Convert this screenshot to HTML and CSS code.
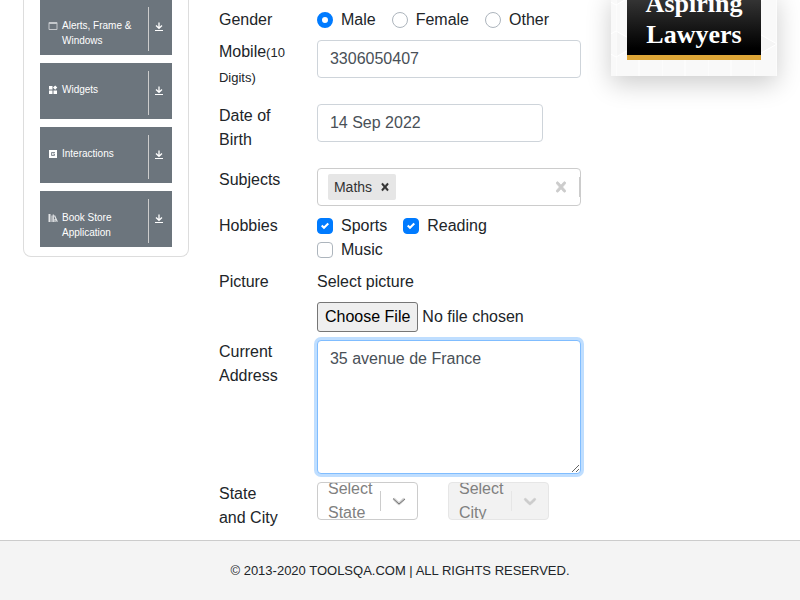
FILE: index.html
```html
<!DOCTYPE html>
<html lang="en">
<head>
<meta charset="utf-8">
<meta name="viewport" content="width=device-width, initial-scale=1">
<title>Student Registration Form</title>
<link rel="stylesheet" href="styles.css">
</head>
<body>
<svg class="sprite" aria-hidden="true">
  <symbol id="down" viewBox="0 0 10 10"><path d="M5 .5v5.5M2 3.500l3 2.800 3-2.800" fill="none" stroke="currentColor" stroke-width="1.300"/><path d="M1 8.500h8" stroke="currentColor"/></symbol>
  <symbol id="cross" viewBox="0 0 20 20"><path fill="currentColor" stroke="currentColor" stroke-width=".8" d="M14.348 14.849c-0.469 0.469-1.229 0.469-1.697 0l-2.651-3.030-2.651 3.029c-0.469 0.469-1.229 0.469-1.697 0-0.469-0.469-0.469-1.229 0-1.697l2.758-3.15-2.759-3.152c-0.469-0.469-0.469-1.228 0-1.697s1.228-0.469 1.697 0l2.652 3.031 2.651-3.031c0.469-0.469 1.228-0.469 1.697 0s0.469 1.229 0 1.697l-2.758 3.152 2.758 3.15c0.469 0.469 0.469 1.229 0 1.698z"/></symbol>
  <symbol id="chevron" viewBox="0 0 20 20"><path fill="currentColor" stroke="currentColor" stroke-width=".5" d="M4.516 7.548c0.436-0.446 1.043-0.481 1.576 0l3.908 3.747 3.908-3.747c0.533-0.481 1.141-0.446 1.574 0 0.436 0.445 0.408 1.197 0 1.615-0.406 0.418-4.695 4.502-4.695 4.502-0.217 0.223-0.502 0.335-0.787 0.335s-0.57-0.112-0.789-0.335c0 0-4.287-4.084-4.695-4.502s-0.436-1.17 0-1.615z"/></symbol>
</svg>
<main class="page">
  <nav class="sidebar" aria-label="Sections">
    <button class="group" type="button">
      <svg class="group-icon" viewBox="0 0 10 10" aria-hidden="true"><path d="M1 1.500h8v7H1z" fill="none" stroke="#c4c8cc"/><path d="M1 2.500h8" stroke="#c4c8cc"/></svg>
      <span class="group-name">Alerts, Frame &amp; Windows</span>
      <span class="group-toggle"><svg class="group-arrow"><use href="#down"/></svg></span>
    </button>
    <button class="group" type="button">
      <svg class="group-icon" viewBox="0 0 10 10" aria-hidden="true"><path d="M1 1h3.500v3.500H1zM1 5.500h3.500v3.500H1zM5.500 5.500H9V9H5.500zM7.200 .4l2.100 2.200-2.100 2.200-2.200-2.200z" fill="#fff"/></svg>
      <span class="group-name">Widgets</span>
      <span class="group-toggle"><svg class="group-arrow"><use href="#down"/></svg></span>
    </button>
    <button class="group" type="button">
      <svg class="group-icon" viewBox="0 0 10 10" aria-hidden="true"><path d="M1 1h8v8H1z" fill="#fff"/><path d="M7 3.500H3.500v3h3V5H4.500" fill="none" stroke="#6c757d" stroke-width=".8"/></svg>
      <span class="group-name">Interactions</span>
      <span class="group-toggle"><svg class="group-arrow"><use href="#down"/></svg></span>
    </button>
    <button class="group" type="button">
      <svg class="group-icon" viewBox="0 0 10 10" aria-hidden="true"><path d="M.5 1h2v8h-2zM3.500 2.500h1V9h-1z" fill="#e2e4e6"/><path d="M5.300 1.500V9M6.500 2.500L9.300 8.800M7 6v3" stroke="#e2e4e6" stroke-width="1.200"/></svg>
      <span class="group-name">Book Store Application</span>
      <span class="group-toggle"><svg class="group-arrow"><use href="#down"/></svg></span>
    </button>
  </nav>

  <form class="form">
    <div class="row" role="radiogroup" aria-labelledby="gender-label">
      <span class="label" id="gender-label">Gender</span>
      <div class="options">
        <label class="option"><input class="radio" type="radio" name="gender" checked>Male</label>
        <label class="option"><input class="radio" type="radio" name="gender">Female</label>
        <label class="option"><input class="radio" type="radio" name="gender">Other</label>
      </div>
    </div>
    <div class="row row-tall">
      <label class="label" for="mobile">Mobile<small class="hint">(10 Digits)</small></label>
      <input class="control" id="mobile" type="text" value="3306050407">
    </div>
    <div class="row row-tall">
      <label class="label" for="birth">Date of Birth</label>
      <input class="control control-date" id="birth" type="text" value="14 Sep 2022">
    </div>
    <div class="row">
      <label class="label" for="subjects">Subjects</label>
      <div class="multi">
        <span class="tag">Maths<button class="tag-remove" type="button" aria-label="Remove Maths"><svg class="tag-cross"><use href="#cross"/></svg></button></span>
        <input class="multi-input" id="subjects" type="text">
        <button class="multi-clear" type="button" aria-label="Clear subjects"><svg class="icon"><use href="#cross"/></svg></button>
        <span class="multi-divider"></span>
      </div>
    </div>
    <div class="row" role="group" aria-labelledby="hobbies-label">
      <span class="label" id="hobbies-label">Hobbies</span>
      <div class="options">
        <label class="option"><input class="check" type="checkbox" checked>Sports</label>
        <label class="option"><input class="check" type="checkbox" checked>Reading</label>
        <label class="option"><input class="check" type="checkbox">Music</label>
      </div>
    </div>
    <div class="row">
      <span class="label">Picture</span>
      <div class="upload">
        <label for="picture">Select picture</label>
        <input class="file" id="picture" type="file">
      </div>
    </div>
    <div class="row">
      <label class="label" for="address">Current Address</label>
      <textarea class="control control-area control-active" id="address" rows="5">35 avenue de France</textarea>
    </div>
    <div class="row">
      <span class="label">State and City</span>
      <div class="places">
        <div class="select">
          <span class="select-text" aria-hidden="true">Select State</span>
          <span class="select-arrow"><svg class="icon" viewBox="0 0 20 20" aria-hidden="true"><use href="#chevron"/><path d="M4 7.500l6 5.500 6-5" fill="none" stroke="#777"/></svg></span>
          <select class="select-native" aria-label="State"><option>Select State</option></select>
        </div>
        <div class="select select-off">
          <span class="select-text" aria-hidden="true">Select City</span>
          <span class="select-arrow"><svg class="icon"><use href="#chevron"/></svg></span>
          <select class="select-native" aria-label="City" disabled><option>Select City</option></select>
        </div>
      </div>
    </div>
  </form>

  <aside class="ad">
    <svg class="ad-pattern" aria-hidden="true">
      <defs><pattern id="mesh" width="46" height="52" patternUnits="userSpaceOnUse" x="5" y="26"><path d="M0 13l23 13L0 39z" fill="#f5f5f5"/><path d="M23 0v52M0 13l46 26M46 13L0 39M0 0v52" fill="none" stroke="#fff"/></pattern></defs>
      <rect width="100%" height="100%" fill="url(#mesh)"/>
    </svg>
    <div class="poster">Aspiring Lawyers</div>
  </aside>
</main>
<footer class="footer">© 2013-2020 TOOLSQA.COM | ALL RIGHTS RESERVED.</footer>
</body>
</html>
```
FILE: styles.css
```css
* { box-sizing: border-box; }

body {
  margin: 0;
  min-height: 100vh;
  display: flex;
  flex-direction: column;
  overflow: hidden;
  background: #fff;
  color: #212529;
  font: 16px/24px "Liberation Sans", Arial, sans-serif;
}

button, input, textarea, select { font: inherit; color: inherit; margin: 0; }

.sprite { position: absolute; width: 0; height: 0; }

/* The page rests slightly scrolled, so its top edge is out of view. */
.page {
  display: grid;
  grid-template-columns: 11fr 24fr 11fr;
  gap: 30px;
  align-items: start;
  margin-top: -8px;
  padding: 0 23px 10px;
}

.sidebar {
  display: flex;
  flex-direction: column;
  gap: 8px;
  padding: 7px 16px 9px;
  border: 1px solid #ddd;
  border-top: 0;
  border-radius: 0 0 8px 8px;
}

.group {
  display: flex;
  height: 56px;
  padding: 8px 0 4px 8px;
  border: 0;
  background: #6c757d;
  color: #fff;
  font-size: 10px;
  line-height: 15px;
  text-align: left;
}

.group-icon { flex: none; width: 10px; height: 10px; margin: 14px 4px 0 0; }
.group-name { flex: 1; min-width: 0; margin-top: 11px; }
.group-toggle { display: flex; width: 24px; height: 44px; padding: 15px 0 0 5px; border-left: 1px solid #ccc; }
.group-arrow { width: 10px; height: 10px; }

.form { display: flex; flex-direction: column; gap: 8px; padding-top: 16px; }
.row { display: grid; grid-template-columns: 68px minmax(0, 1fr); gap: 30px; align-items: start; }
.row-tall { height: 56px; }
.hint { font-size: 13px; }

.options { display: flex; flex-wrap: wrap; }
.option { display: flex; align-items: center; gap: 8px; margin-right: 16px; }

.radio, .check {
  appearance: none;
  width: 16px;
  height: 16px;
  border: 1px solid #adb5bd;
  background: #fff;
}
.radio { border-radius: 50%; }
.radio:checked { border: 5px solid #007bff; }
.check { border-radius: 4px; }
.check:checked {
  border-color: #007bff;
  background: #007bff url("data:image/svg+xml,%3Csvg xmlns='http://www.w3.org/2000/svg' viewBox='0 0 8 8'%3E%3Cpath fill='%23fff' d='M6.564.75l-3.590 3.612-1.538-1.550L0 4.260l2.974 2.990L8 2.193z'/%3E%3C/svg%3E") center / 8px 8px no-repeat;
}

.control {
  width: 100%;
  height: 38px;
  padding: 6px 12px;
  border: 1px solid #ced4da;
  border-radius: 4px;
  background: #fff;
  color: #495057;
}
.control-date { max-width: 226px; }
.control-area { display: block; height: 134px; resize: vertical; }
.control-active { border-color: #80bdff; outline: 0; box-shadow: 0 0 0 3px #bfdeff; }

.multi {
  position: relative;
  display: flex;
  align-items: center;
  height: 38px;
  padding: 0 9px 0 10px;
  border: 1px solid #ccc;
  border-radius: 4px;
}
.tag { display: flex; align-items: center; height: 26px; padding-left: 6px; border-radius: 2px; background: #e6e6e6; color: #333; font-size: 14px; }
.tag-remove, .multi-clear { display: flex; padding: 0; border: 0; background: none; }
.tag-remove { padding: 0 4px 0 6px; }
.tag-cross { width: 14px; height: 14px; }
.multi-input { flex: 1; min-width: 0; border: 0; outline: 0; background: none; }
.icon { width: 20px; height: 20px; color: #ccc; }
.multi-divider { position: absolute; right: -1px; top: 8px; width: 2px; height: 20px; background: #ccc; }

.upload { display: flex; flex-direction: column; gap: 8px; }
.file { width: 100%; height: 30px; }
.file::file-selector-button {
  height: 30px;
  margin: 0 4px 0 0;
  padding: 0 7px;
  border: 1px solid #767676;
  border-radius: 3px;
  background: #efefef;
  color: #000;
  font: inherit;
}

.places { display: grid; grid-template-columns: repeat(2, minmax(0, 101px)); gap: 30px; }
.select {
  position: relative;
  display: flex;
  align-items: center;
  height: 38px;
  overflow: hidden;
  border: 1px solid #ccc;
  border-radius: 4px;
  color: #808080;
}
.select-text { flex: 1; min-width: 0; padding-left: 10px; }
.select-arrow { display: flex; padding: 0 8px; border-left: 1px solid #ccc; }
.select-native { position: absolute; inset: 0; width: 100%; opacity: 0; }
.select-off { border-color: #e6e6e6; background: #f2f2f2; }
.select-off .select-arrow { border-color: #e6e6e6; }

.ad {
  position: relative;
  padding: 0 16px 16px;
  background: #f9f9f9;
  box-shadow: 0 8px 24px rgba(0, 0, 0, .2);
}
.ad-pattern { position: absolute; inset: 0; width: 100%; height: 100%; }
.poster {
  position: relative;
  display: flex;
  align-items: flex-end;
  height: 68px;
  padding: 0 16px 5px;
  overflow: hidden;
  border-bottom: 5px solid #dda536;
  background: linear-gradient(#3c3c3c, #000 90%);
  color: #fff;
  font: bold 26px/31px "Liberation Serif", "Times New Roman", serif;
  text-align: center;
}

.footer {
  flex: 1;
  display: flex;
  align-items: center;
  justify-content: center;
  border-top: 1px solid #ccc;
  background: #f4f4f4;
  color: #212529;
  font-size: 13px;
}
```
